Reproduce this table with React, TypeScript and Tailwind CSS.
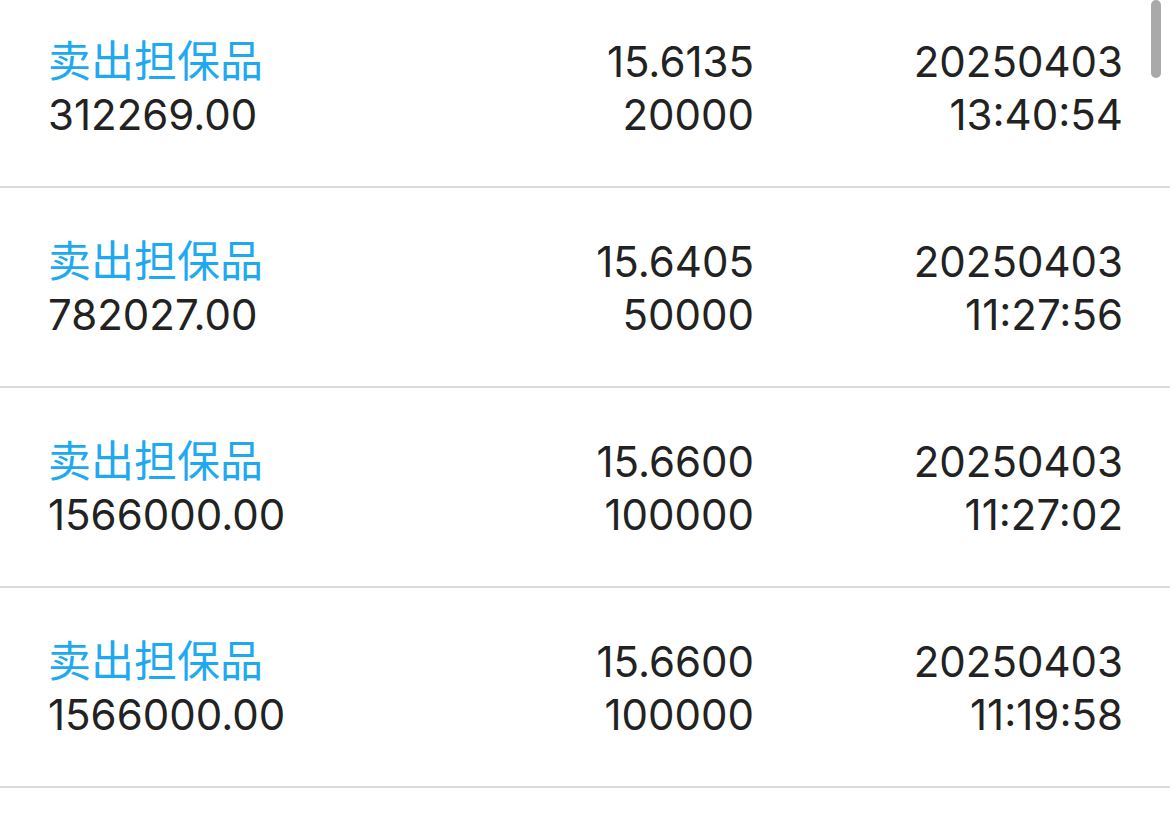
import React from "react";

const rows = [
  { amt: "312269.00", price: "15.6135", qty: "20000", date: "20250403", time: "13:40:54" },
  { amt: "782027.00", price: "15.6405", qty: "50000", date: "20250403", time: "11:27:56" },
  { amt: "1566000.00", price: "15.6600", qty: "100000", date: "20250403", time: "11:27:02" },
  { amt: "1566000.00", price: "15.6600", qty: "100000", date: "20250403", time: "11:19:58" },
];

export default function App() {
  return (
    <div
      className="relative w-[1170px] h-[817px] overflow-hidden bg-white"
      style={{ fontFamily: 'Inter, "Noto Sans CJK SC", sans-serif' }}
    >
      <div className="-mt-[12px]">
        {rows.map((r, i) => (
          <div
            key={i}
            className="flex h-[200px] border-b-2 border-[#dcdcdc] pl-[48px] pr-[47px] pt-[47px] text-[42px] leading-[53px] text-[#222222]"
          >
            <div className="flex-1 flex flex-col">
              <span className="text-[#1fa9f0] text-[43px]">卖出担保品</span>
              <span>{r.amt}</span>
            </div>
            <div className="w-[302px] flex flex-col items-end">
              <span>{r.price}</span>
              <span>{r.qty}</span>
            </div>
            <div className="w-[369px] flex flex-col items-end">
              <span>{r.date}</span>
              <span>{r.time}</span>
            </div>
          </div>
        ))}
      </div>
      <div className="absolute right-[9px] top-0 w-[10px] h-[78px] rounded-full bg-[#a9a9a9]" />
    </div>
  );
}
